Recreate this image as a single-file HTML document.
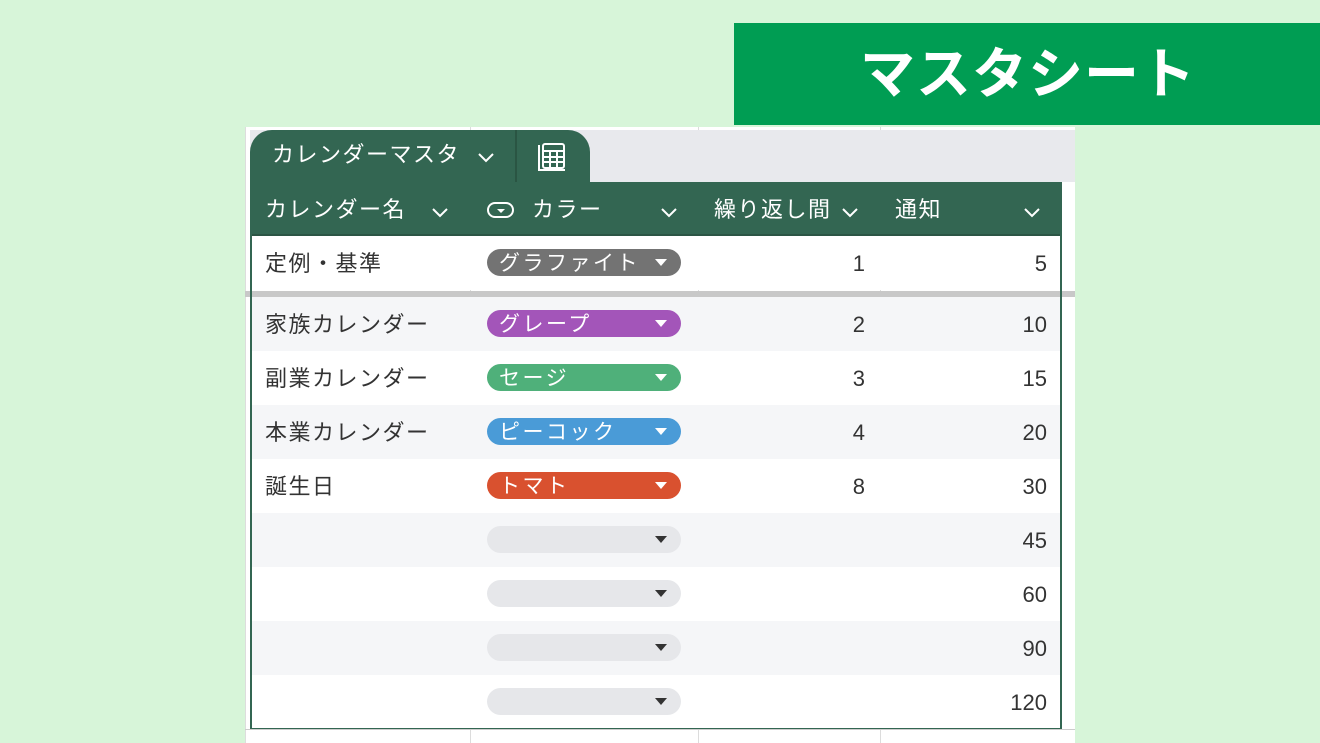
<!DOCTYPE html>
<html><head><meta charset="utf-8"><style>
*{margin:0;padding:0;box-sizing:border-box}
body{width:1320px;height:743px;background:#d7f5d9;position:relative;overflow:hidden;font-family:"Liberation Sans","Noto Sans CJK JP",sans-serif}
.abs{position:absolute}
.banner{left:734px;top:23px;width:586px;height:102px;background:#009d53;color:#fff;font-weight:bold;font-size:55px;line-height:102px;text-align:center;padding-left:2px;letter-spacing:1px}
.sheet{left:245px;top:127px;width:830px;height:616px;background:#fff;border-left:1px solid #ddd}
.vl{width:1px;background:#dcdcdc;top:127px;height:616px}
.tabbg{left:250px;top:130px;width:825px;height:52px;background:#e8e9ed}
.tab{left:250px;top:130px;width:340px;height:54px;background:#336652;border-radius:22px 22px 0 0}
.hdr{left:250px;top:182px;width:812px;height:54px;background:#336652;border-bottom:2px solid #2b5544}
.ht{color:#fff;font-size:22px;line-height:56px;letter-spacing:1.5px}
.row{left:250px;width:812px;height:54px}
.tx{font-size:22px;color:#333;line-height:56px;letter-spacing:1.5px}
.chip{left:487px;width:194px;height:27px;border-radius:14px;color:#fff;font-size:21px;line-height:29px;padding-left:12px;letter-spacing:2.5px}
.chip:after{content:"";position:absolute;right:14px;top:10px;border-left:6px solid transparent;border-right:6px solid transparent;border-top:7px solid #fff}
.chip.e{background:#e6e7ea}
.chip.e:after{border-top-color:#333}
.num{font-size:22px;color:#333;line-height:56px;text-align:right}
</style></head><body>
<div class="abs banner">マスタシート</div>
<div class="abs sheet"></div>
<div class="abs vl" style="left:470px"></div>
<div class="abs vl" style="left:698px"></div>
<div class="abs vl" style="left:880px"></div>
<div class="abs tabbg"></div>
<div class="abs tab"></div>
<div class="abs" style="left:515px;top:130px;width:2px;height:52px;background:#2a5543"></div>
<div class="abs ht" style="left:272px;top:127px">カレンダーマスタ</div>
<svg class="abs" style="left:476px;top:150px" width="20" height="14"><path d="M3 4l7 7 7-7" stroke="#fff" stroke-width="2" fill="none"/></svg>
<svg class="abs" style="left:537px;top:141px" width="32" height="32" fill="none" stroke="#fff" stroke-width="2"><path d="M2 4V29h26"/><rect x="6" y="3" width="21" height="24" rx="2"/><path d="M6 10h21M13 10v17M20 10v17M6 16h21M6 21h21"/></svg>
<div class="abs hdr"></div>
<div class="abs ht" style="left:265px;top:182px">カレンダー名</div>
<svg class="abs" style="left:430px;top:205px" width="20" height="14"><path d="M3 4l7 7 7-7" stroke="#fff" stroke-width="2" fill="none"/></svg>
<svg class="abs" style="left:486px;top:201px" width="30" height="18"><rect x="2" y="2" width="25" height="14" rx="7" stroke="#fff" stroke-width="2" fill="none"/><path d="M11 8l4 4 4-4z" fill="#fff"/></svg>
<div class="abs ht" style="left:532px;top:182px">カラー</div>
<svg class="abs" style="left:659px;top:205px" width="20" height="14"><path d="M3 4l7 7 7-7" stroke="#fff" stroke-width="2" fill="none"/></svg>
<div class="abs ht" style="left:714px;top:182px">繰り返し間</div>
<svg class="abs" style="left:840px;top:205px" width="20" height="14"><path d="M3 4l7 7 7-7" stroke="#fff" stroke-width="2" fill="none"/></svg>
<div class="abs ht" style="left:895px;top:182px">通知</div>
<svg class="abs" style="left:1022px;top:205px" width="20" height="14"><path d="M3 4l7 7 7-7" stroke="#fff" stroke-width="2" fill="none"/></svg>

<div class="abs row" style="top:236px;background:#fff"></div>
<div class="abs" style="left:245px;top:291px;width:830px;height:6px;background:#c8c8c8"></div>
<div class="abs row" style="top:297px;background:#f5f6f8"></div>
<div class="abs row" style="top:351px;background:#fff"></div>
<div class="abs row" style="top:405px;background:#f5f6f8"></div>
<div class="abs row" style="top:459px;background:#fff"></div>
<div class="abs row" style="top:513px;background:#f5f6f8"></div>
<div class="abs row" style="top:567px;background:#fff"></div>
<div class="abs row" style="top:621px;background:#f5f6f8"></div>
<div class="abs row" style="top:675px;background:#fff"></div>
<div class="abs" style="left:250px;top:182px;width:812px;height:548px;border:2px solid #336652;border-top:none"></div>
<div class="abs" style="left:245px;top:729px;width:830px;height:1px;background:#ccc"></div>

<div class="abs tx" style="left:265px;top:236px">定例・基準</div>
<div class="abs tx" style="left:265px;top:297px">家族カレンダー</div>
<div class="abs tx" style="left:265px;top:351px">副業カレンダー</div>
<div class="abs tx" style="left:265px;top:405px">本業カレンダー</div>
<div class="abs tx" style="left:265px;top:459px">誕生日</div>

<div class="abs chip" style="top:249px;background:#737373">グラファイト</div>
<div class="abs chip" style="top:310px;background:#a355b9">グレープ</div>
<div class="abs chip" style="top:364px;background:#4fb07a">セージ</div>
<div class="abs chip" style="top:418px;background:#4a9bd7">ピーコック</div>
<div class="abs chip" style="top:472px;background:#d9512f">トマト</div>
<div class="abs chip e" style="top:526px"></div>
<div class="abs chip e" style="top:580px"></div>
<div class="abs chip e" style="top:634px"></div>
<div class="abs chip e" style="top:688px"></div>

<div class="abs num" style="left:700px;width:165px;top:236px">1</div>
<div class="abs num" style="left:700px;width:165px;top:297px">2</div>
<div class="abs num" style="left:700px;width:165px;top:351px">3</div>
<div class="abs num" style="left:700px;width:165px;top:405px">4</div>
<div class="abs num" style="left:700px;width:165px;top:459px">8</div>
<div class="abs num" style="left:880px;width:167px;top:236px">5</div>
<div class="abs num" style="left:880px;width:167px;top:297px">10</div>
<div class="abs num" style="left:880px;width:167px;top:351px">15</div>
<div class="abs num" style="left:880px;width:167px;top:405px">20</div>
<div class="abs num" style="left:880px;width:167px;top:459px">30</div>
<div class="abs num" style="left:880px;width:167px;top:513px">45</div>
<div class="abs num" style="left:880px;width:167px;top:567px">60</div>
<div class="abs num" style="left:880px;width:167px;top:621px">90</div>
<div class="abs num" style="left:880px;width:167px;top:675px">120</div>
</body></html>
